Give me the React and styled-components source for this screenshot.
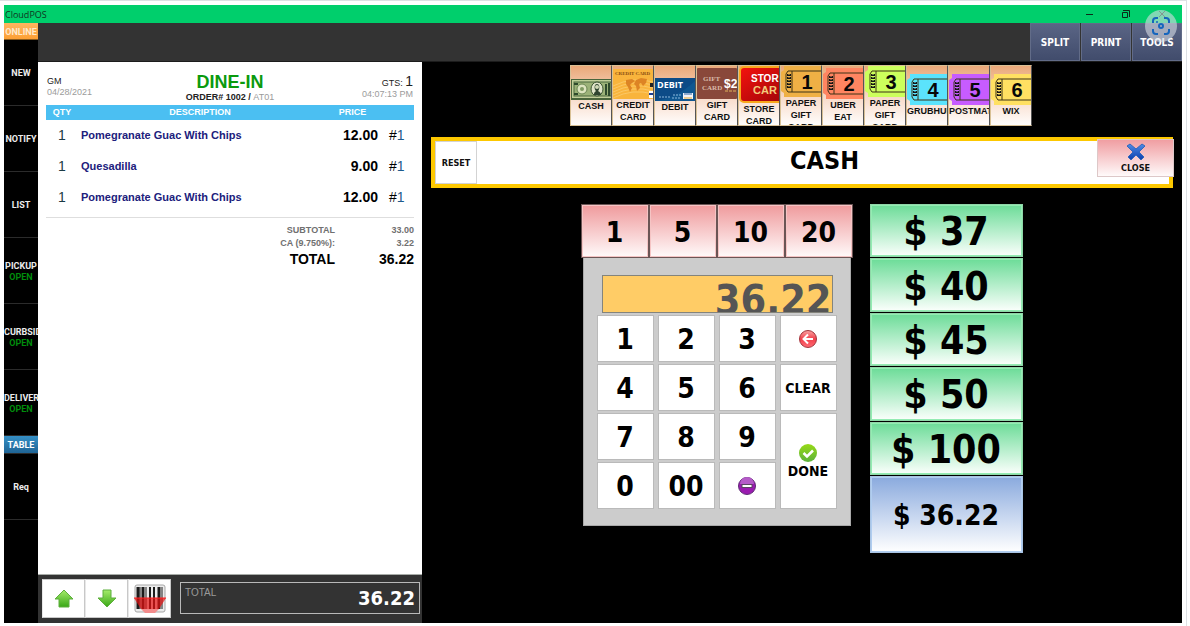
import styled, { createGlobalStyle, css } from "styled-components";

const tahoma = `"DejaVu Sans Condensed", "DejaVu Sans", sans-serif`;
const arial = `"Liberation Sans", Arial, sans-serif`;

const GlobalStyle = createGlobalStyle`
  * {
    box-sizing: border-box;
  }
  body {
    margin: 0;
    background: #ffffff;
    font-family: ${arial};
  }
  button {
    margin: 0;
    padding: 0;
    border: 0;
    cursor: pointer;
    color: inherit;
    font: inherit;
  }
`;

const Page = styled.div`
  display: flex;
  min-height: 100vh;
  margin-right: 3px;
  padding: 4px 4px 3px;
  border-top: 1px solid #dde0e4;
  border-right: 1px solid #dde0e4;
`;

const Window = styled.div`
  position: relative;
  flex: 1;
  display: flex;
  flex-direction: column;
  background: #000000;
`;

const TitleBar = styled.header`
  display: flex;
  justify-content: space-between;
  align-items: center;
  height: 18px;
  padding: 0 15px 0 1px;
  background: #00cf6c;
  color: #10351f;
  font: 9px "Open Sans", "Noto Sans", sans-serif;
`;

const WindowButtons = styled.div`
  display: flex;
  gap: 26px;
`;

const WindowButton = styled.button`
  display: flex;
  background: none;
`;

const LensButton = styled.button`
  position: absolute;
  top: 5px;
  right: 5px;
  display: flex;
  justify-content: center;
  align-items: center;
  width: 32px;
  height: 32px;
  border-radius: 50%;
  background: rgba(215, 220, 228, 0.6);
`;

const Body = styled.div`
  flex: 1;
  display: flex;
`;

const SideNav = styled.nav`
  display: flex;
  flex-direction: column;
  width: 34px;
  background: #000000;
`;

const NavButton = styled.button`
  width: 100%;
  height: 66px;
  padding-top: 2px;
  overflow: hidden;
  border-bottom: 1px solid #2b2b2b;
  background: #000000;
  color: #ececec;
  font: bold 9px/11px Roboto, sans-serif;
  text-align: center;
  white-space: nowrap;

  ${({ $tone }) =>
    $tone === "orange" &&
    css`
      height: 17px;
      border-bottom: 1px solid #8a5a1c;
      background: linear-gradient(#ffb560, #fda035);
      color: #ffe9cc;
    `}

  ${({ $tone }) =>
    $tone === "blue" &&
    css`
      height: 18px;
      background: linear-gradient(#3590c6, #1f6495);
      color: #ffffff;
    `}
`;

const OpenState = styled.span`
  display: block;
  color: #008c0c;
`;

const Main = styled.div`
  flex: 1;
  display: flex;
  flex-direction: column;
`;

const TopBar = styled.div`
  display: flex;
  justify-content: flex-end;
  gap: 1px;
  height: 39px;
  border-bottom: 1px solid #1c1c1c;
  background: #333333;
`;

const TopButton = styled.button`
  width: 50px;
  border: 1px solid #626c88;
  background: linear-gradient(#5a6585, #414c6c);
  color: #ffffff;
  font: bold 10px ${tahoma};
`;

const Content = styled.div`
  flex: 1;
  display: flex;
`;

const TicketColumn = styled.section`
  display: flex;
  flex-direction: column;
  width: 384px;
  background: #ffffff;
`;

const Ticket = styled.div`
  flex: 1;
  padding: 12px 8px 0;
`;

const TicketHead = styled.div`
  display: grid;
  grid-template-columns: 1fr auto 1fr;
  height: 31px;
  color: #222222;
  font-size: 9px;
  line-height: 11px;
`;

const HeadSide = styled.div`
  padding: 2px 1px 0;
  text-align: ${({ $right }) => ($right ? "right" : "left")};
`;

const Muted = styled.div`
  color: #9b9b9b;
`;

const Guests = styled.span`
  font-size: 14px;
  line-height: 11px;
`;

const OrderTitle = styled.div`
  font-weight: bold;
  line-height: 13px;
  text-align: center;
`;

const OrderType = styled.h1`
  margin: 0;
  color: #0a9a0e;
  font-size: 18px;
  line-height: 17px;
`;

const TableName = styled.span`
  color: #9b9b9b;
  font-weight: normal;
`;

const ItemTable = styled.table`
  width: 100%;
  border-collapse: collapse;
  table-layout: fixed;

  th {
    height: 15px;
    padding: 0;
    background: #4bbff2;
    color: #ffffff;
    font-size: 9px;
    line-height: 13px;
  }

  td {
    height: 31px;
    padding: 0 0 2px;
    font-size: 14px;
  }
`;

const Qty = styled.td`
  color: #1b3b44;
  text-align: center;
`;

const ItemName = styled.td`
  && {
    padding-left: 3px;
    color: #20207c;
    font-size: 11px;
    font-weight: bold;
  }
`;

const Price = styled.td`
  && {
    padding-right: 5px;
    font-weight: bold;
    text-align: right;
  }
`;

const Seat = styled.td`
  && {
    padding-left: 6px;
  }
`;

const SeatNumber = styled.span`
  color: #1d5a8c;
`;

const Totals = styled.dl`
  display: grid;
  grid-template-columns: 1fr 79px;
  margin: 4px 0 0;
  padding-top: 6px;
  border-top: 1px solid #dedede;
  color: #707070;
  font-size: 9px;
  font-weight: bold;
  line-height: 13px;
  text-align: right;

  dd {
    margin: 0;
  }

  dt:last-of-type,
  dd:last-of-type {
    color: #000000;
    font-size: 14px;
    line-height: 18px;
  }
`;

const TicketFooter = styled.div`
  display: flex;
  height: 49px;
  padding: 4px 2px 5px 4px;
  border-top: 1px solid #a8aca8;
  background: #333333;
`;

const ToolButton = styled.button`
  display: flex;
  justify-content: center;
  align-items: center;
  width: 43px;
  border: 1px solid #c8c8c8;
  border-left-color: #e8e8e8;
  background: #ffffff;
`;

const FooterTotal = styled.div`
  flex: 1;
  display: flex;
  justify-content: space-between;
  margin: 3px 0 4px 9px;
  padding: 4px 4px 0;
  border: 1px solid #b9b9b9;
  color: #9a9a9a;
  font-size: 10px;
`;

const FooterAmount = styled.strong`
  color: #ffffff;
  font: bold 20px/22px ${tahoma};
`;

const PayArea = styled.main`
  flex: 1;
  display: flex;
  flex-direction: column;
  align-items: center;
  padding: 3px 9px 0;
`;

const TenderRow = styled.div`
  display: flex;
  height: 61px;
  padding-right: 2px;
`;

const TenderButton = styled.button`
  display: flex;
  flex-direction: column;
  align-items: center;
  justify-content: safe center;
  width: 42px;
  height: 61px;
  overflow: hidden;
  border: 1px solid #d8c095;
  border-right-color: #555555;
  background: linear-gradient(#eaa878, #f8dccb 55%, #fffdfc);
  color: #111111;
  font: bold 9px/12px ${arial};

  svg {
    flex: none;
  }
`;

const TenderLabel = styled.span`
  flex: none;
  max-width: 100%;
  text-align: center;
`;

const TenderBar = styled.div`
  position: relative;
  display: flex;
  align-self: stretch;
  height: 51px;
  margin-top: 11px;
  border: 4px solid #fdc800;
  background: #ffffff;
`;

const ResetButton = styled.button`
  width: 42px;
  border: 1px solid #d3d3d3;
  background: #ffffff;
  color: #111111;
  font: bold 9px ${tahoma};
`;

const TenderTitle = styled.h2`
  flex: 1;
  margin: 0;
  padding-left: 3px;
  font: bold 25px/40px ${tahoma};
  text-align: center;
`;

const CloseButton = styled.button`
  position: absolute;
  top: -2px;
  right: -5px;
  display: flex;
  flex-direction: column;
  align-items: center;
  justify-content: center;
  gap: 2px;
  width: 77px;
  height: 38px;
  border: 1px solid #ddc8c8;
  background: linear-gradient(#f09ea2, #fffafa);
  color: #111111;
  font: bold 9px/10px ${tahoma};
`;

const PayPanels = styled.div`
  display: flex;
  gap: 17px;
  margin-top: 16px;
  padding-right: 1px;
`;

const PadColumn = styled.div`
  width: 272px;
`;

const BillRow = styled.div`
  display: grid;
  grid-template-columns: repeat(4, 1fr);
`;

const BillButton = styled.button`
  height: 54px;
  padding-top: 2px;
  border: 1px solid #6b5555;
  box-shadow: inset 0 0 0 1px #f5c4c4;
  background: linear-gradient(#ef9a9c, #fffafa);
  color: #000000;
  font: bold 28px ${tahoma};
`;

const Pad = styled.div`
  margin: 0 2px;
  padding: 17px 13px 16px;
  border: 1px solid #a9a9a9;
  border-top: 0;
  background: #cccccc;
`;

const AmountDisplay = styled.output`
  display: block;
  height: 38px;
  margin: 0 4px 2px 5px;
  overflow: hidden;
  border: 1px solid #84847c;
  background: #ffcc66;
  color: #555555;
  font: bold 41px/48px ${tahoma};
  text-align: right;
`;

const Keys = styled.div`
  display: grid;
  grid-template-columns: repeat(4, 1fr);
  grid-template-rows: repeat(4, 47px);
  gap: 2px 4px;
`;

const Key = styled.button`
  display: flex;
  flex-direction: column;
  align-items: center;
  justify-content: center;
  grid-row: span ${({ $tall }) => ($tall ? 2 : 1)};
  padding-top: ${({ $digit }) => ($digit ? "3px" : "0")};
  border: 1px solid #bababa;
  background: #ffffff;
  color: #000000;
  font: bold ${({ $word }) => ($word ? "14px/16px" : "28px/32px")} ${tahoma};
`;

const QuickColumn = styled.div`
  display: grid;
  grid-template-rows: repeat(5, 1fr) 77px;
  gap: 1px;
  width: 153px;
  height: 349px;
`;

const QuickButton = styled.button`
  padding-top: 3px;
  border: 1px solid #8fd6a8;
  box-shadow: inset 0 0 0 1px #93ecb2;
  background: linear-gradient(#6cdc98, #fbfffc);
  color: #000000;
  font: bold 39px/44px ${tahoma};
  white-space: nowrap;

  ${({ $exact }) =>
    $exact &&
    css`
      border-color: #a9c4e4;
      box-shadow: inset 0 0 0 1px #b0cdf0;
      background: linear-gradient(#8aaade, #ffffff);
      font-size: 28px;
    `}
`;

const CashArt = () => (
  <svg width="40" height="21" viewBox="0 0 40 21">
    <rect width="40" height="21" fill="#49653b" />
    <rect x="1" y="1" width="39" height="18" fill="#c2cf9a" />
    <rect x="3" y="3" width="37" height="14" fill="#9bb278" stroke="#4a683c" />
    <circle cx="11" cy="10" r="5" fill="#dce4bf" stroke="#6a8552" />
    <circle cx="11" cy="10" r="2" fill="#7f9a63" />
    <ellipse cx="26" cy="10" rx="6" ry="7" fill="#dfe4c8" stroke="#3c5532" />
    <path d="M23 16c0-3 1-3 2-4-2-2-2-7 1-7s3 5 1 7c2 1 3 2 3 4z" fill="#2f4530" />
    <circle cx="26" cy="8" r="2" fill="#cfd8b5" />
    <path d="M35 5v11M38 4v13M3 5h4M3 15h4" stroke="#2f4a2c" strokeWidth="2" />
  </svg>
);

const CreditArt = () => (
  <svg width="40" height="30" viewBox="0 0 40 30">
    <rect width="40" height="30" rx="1" fill="#f9b43c" />
    <path d="M0 17Q20 7 40 13M0 20Q20 10 40 16M0 23Q20 13 40 19M0 26Q20 16 40 22M0 29Q20 19 40 25" fill="none" stroke="#fbc765" />
    <text x="2" y="6" fontFamily="Liberation Serif, serif" fontSize="5" fill="#8a4d10">CREDIT CARD</text>
    <path d="M13 11l6-1 3 2-3 2-2 2 2 3-2 4-2-5-2-3zM23 11l5-2 6 1-1 4-3 3-2-3-2 1 1 4-3 3-1-5-2-2z" fill="#dd8424" />
    <rect x="37" y="14" width="3" height="4" fill="#222222" />
    <rect x="36" y="22" width="4" height="7" fill="#ffffff" />
    <path d="M36 25h4" stroke="#1d3f92" strokeWidth="2" />
  </svg>
);

const DebitArt = () => (
  <svg width="40" height="23" viewBox="0 0 40 23">
    <rect width="40" height="23" fill="#0c4b87" />
    <path d="M0 23Q22 20 40 3v20z" fill="#0f5791" />
    <text x="2" y="10" fontFamily="Open Sans, sans-serif" fontSize="9" fontWeight="bold" fill="#ffffff">DEBIT</text>
    <path d="M4 19h12M18 17h8M17 20h9" stroke="#8bb8dc" strokeDasharray="2 1" />
    <rect x="28" y="15" width="10" height="6" fill="#f2f4f8" />
    <path d="M29 16h8" stroke="#2962a5" />
    <path d="M29 20h8" stroke="#e7a92d" />
  </svg>
);

const GiftArt = () => (
  <svg width="40" height="31" viewBox="0 0 40 31">
    <rect width="40" height="31" rx="1" fill="#89483a" />
    <g fontFamily="Liberation Serif, serif" fontSize="7" fontWeight="bold" fill="#d9b9a8">
      <text x="6" y="13">GIFT</text>
      <text x="5" y="22">CARD</text>
    </g>
    <text x="27" y="20" fontFamily="Liberation Sans, sans-serif" fontSize="12" fontWeight="bold" fill="#ffffff">$2</text>
    <path d="M28 23h12" stroke="#e0b35c" strokeDasharray="3 1" />
  </svg>
);

const StoreArt = () => (
  <svg width="40" height="37" viewBox="0 0 40 37">
    <defs>
      <linearGradient id="store" x2="1" y2="1">
        <stop offset="0" stopColor="#f5120e" />
        <stop offset="1" stopColor="#9c0508" />
      </linearGradient>
    </defs>
    <rect x="1" y="1" width="48" height="35" rx="4" fill="url(#store)" stroke="#f8a81c" strokeWidth="2" />
    <g fontFamily="Liberation Sans, sans-serif" fontSize="10" fontWeight="bold">
      <text x="12" y="16" fill="#ffffff">STOR</text>
      <text x="14" y="28" fontSize="11" fill="#f2ca7c">CAR</text>
    </g>
  </svg>
);

const TicketArt = ({ number, color }) => (
  <svg width="40" height="31" viewBox="0 0 40 31">
    <path d="M3 0h37v31H3v-4L0 25V6l3-2z" fill={color} />
    <path d="M40 5H7L5 8v15l2 3h33M11 5v21" fill="none" stroke="#3d3216" />
    <path d="M8 8v15" stroke="#151515" strokeWidth="4" strokeDasharray="2 1" />
    <path d="M8 8v15" stroke={color} strokeDasharray="1 2" />
    <text x="26" y="23" textAnchor="middle" fontFamily="Liberation Sans, sans-serif" fontSize="20" fontWeight="bold" fill="#080808">
      {number}
    </text>
  </svg>
);

const ArrowArt = ({ down }) => (
  <svg width="20" height="20" viewBox="0 0 20 20">
    <defs>
      <linearGradient id="arrow" x2="0" y2="1">
        <stop offset="0" stopColor="#a5ec6b" />
        <stop offset="1" stopColor="#39a716" />
      </linearGradient>
    </defs>
    <path
      d={down ? "M6 1h8v8h5l-9 9-9-9h5z" : "M10 1l9 9h-4v8H5v-8H1z"}
      fill="url(#arrow)"
      stroke="#5dae3c"
      strokeLinejoin="round"
    />
  </svg>
);

const BarcodeArt = () => (
  <svg width="34" height="30" viewBox="0 0 34 30">
    <rect x="2" y="1" width="30" height="27" rx="2" fill="#ececec" stroke="#a7a7a7" />
    <path d="M5 3v22M10 3v22M26 3v22" stroke="#1c1c1c" strokeWidth="3" />
    <path d="M7 3v22M13 3v22M29 3v22" stroke="#1c1c1c" />
    <path d="M17 3v22M21 3v22" stroke="#1c1c1c" strokeWidth="2" />
    <path d="M1 14h32l-7 11H8z" fill="#e80f0f" fillOpacity="0.7" />
    <path d="M8 25h18l-4 4H12z" fill="#f38b8b" />
    <path d="M1 14h32" stroke="#ff2222" />
  </svg>
);

const CrossArt = () => (
  <svg width="20" height="18" viewBox="0 0 20 18">
    <defs>
      <linearGradient id="cross" x2="0" y2="1">
        <stop offset="0" stopColor="#4f8be6" />
        <stop offset="1" stopColor="#0c3fae" />
      </linearGradient>
    </defs>
    <path
      d="M1 3l3-2 6 5 6-5 3 2-6 6 5 5-3 3-5-5-5 5-3-3 5-5z"
      fill="url(#cross)"
      stroke="#3468bb"
      strokeLinejoin="round"
    />
  </svg>
);

const BackArt = () => (
  <svg width="20" height="20" viewBox="0 0 20 20">
    <defs>
      <linearGradient id="back" x2="0" y2="1">
        <stop offset="0" stopColor="#f9a3a3" />
        <stop offset="0.5" stopColor="#f2404c" />
        <stop offset="1" stopColor="#ff6b74" />
      </linearGradient>
    </defs>
    <circle cx="10" cy="10" r="8.5" fill="url(#back)" stroke="#a3353c" />
    <path d="M15 10H6M10 5.500l-4.500 4.500 4.500 4.500" fill="none" stroke="#ffffff" strokeWidth="2" />
  </svg>
);

const DoneArt = () => (
  <svg width="20" height="20" viewBox="0 0 20 20">
    <defs>
      <linearGradient id="done" x2="0" y2="1">
        <stop offset="0" stopColor="#97da16" />
        <stop offset="1" stopColor="#5cb13c" />
      </linearGradient>
    </defs>
    <circle cx="10" cy="10" r="9" fill="url(#done)" />
    <path d="M5.500 10l3.500 3.500 6-6" fill="none" stroke="#ffffff" strokeWidth="2.500" />
  </svg>
);

const MinusArt = () => (
  <svg width="20" height="20" viewBox="0 0 20 20">
    <circle cx="10" cy="10" r="8.500" fill="#9a1bb0" stroke="#5f2d75" />
    <path d="M3 8a7 7 0 0 1 14 0" fill="#b55bc8" />
    <rect x="5" y="8.500" width="10" height="3" fill="#ffffff" stroke="#5b4663" />
  </svg>
);

const LensArt = () => (
  <svg width="18" height="18" viewBox="0 0 18 18" fill="none" stroke="#1565bd" strokeWidth="2">
    <path d="M1 6V4a3 3 0 0 1 3-3h2M12 1h2a3 3 0 0 1 3 3v2M17 12v2a3 3 0 0 1-3 3h-2M6 17H4a3 3 0 0 1-3-3v-2" />
    <circle cx="9" cy="9" r="2" />
    <circle cx="5" cy="5" r="1" fill="#1565bd" stroke="none" />
  </svg>
);

const navItems = [
  { label: "ONLINE", tone: "orange" },
  { label: "NEW" },
  { label: "NOTIFY" },
  { label: "LIST" },
  { label: "PICKUP", open: true },
  { label: "CURBSIDE", open: true },
  { label: "DELIVERY", open: true },
  { label: "TABLE", tone: "blue" },
  { label: "Req" },
];

const items = [
  { qty: 1, name: "Pomegranate Guac With Chips", price: "12.00", seat: 1 },
  { qty: 1, name: "Quesadilla", price: "9.00", seat: 1 },
  { qty: 1, name: "Pomegranate Guac With Chips", price: "12.00", seat: 1 },
];

const tenders = [
  { label: "CASH", art: <CashArt /> },
  { label: "CREDIT CARD", art: <CreditArt /> },
  { label: "DEBIT", art: <DebitArt /> },
  { label: "GIFT CARD", art: <GiftArt /> },
  { label: "STORE CARD", art: <StoreArt /> },
  { label: "PAPER GIFT CARD", art: <TicketArt number={1} color="#efb045" /> },
  { label: "UBER EAT", art: <TicketArt number={2} color="#ff8561" /> },
  { label: "PAPER GIFT CARD", art: <TicketArt number={3} color="#ccff5c" /> },
  { label: "GRUBHUB", art: <TicketArt number={4} color="#5be3fc" /> },
  { label: "POSTMATES", art: <TicketArt number={5} color="#c75cff" /> },
  { label: "WIX", art: <TicketArt number={6} color="#ffe062" /> },
];

const App = () => {
  return (
    <Page>
      <GlobalStyle />
      <Window>
        <TitleBar>
          <span>CloudPOS</span>
          <WindowButtons>
            <WindowButton aria-label="Minimize">
              <svg width="10" height="10" viewBox="0 0 10 10">
                <path d="M1 5.500h7" stroke="#0b2b18" />
              </svg>
            </WindowButton>
            <WindowButton aria-label="Restore">
              <svg width="10" height="10" viewBox="0 0 10 10">
                <path d="M1.500 3.500h5v5h-5zM2 1.500h6.500V8" fill="none" stroke="#0b2b18" />
              </svg>
            </WindowButton>
            <WindowButton aria-label="Close window">
              <svg width="10" height="10" viewBox="0 0 10 10">
                <path d="M2 2l6 6M8 2L2 8" stroke="#0b2b18" />
              </svg>
            </WindowButton>
          </WindowButtons>
        </TitleBar>

        <Body>
          <SideNav>
            {navItems.map((item) => (
              <NavButton key={item.label} $tone={item.tone}>
                {item.label}
                {item.open && <OpenState>OPEN</OpenState>}
              </NavButton>
            ))}
          </SideNav>

          <Main>
            <TopBar>
              <TopButton>SPLIT</TopButton>
              <TopButton>PRINT</TopButton>
              <TopButton>TOOLS</TopButton>
            </TopBar>

            <Content>
              <TicketColumn>
                <Ticket>
                  <TicketHead>
                    <HeadSide>
                      GM
                      <Muted>04/28/2021</Muted>
                    </HeadSide>
                    <OrderTitle>
                      <OrderType>DINE-IN</OrderType>
                      ORDER# 1002 / <TableName>AT01</TableName>
                    </OrderTitle>
                    <HeadSide $right>
                      GTS: <Guests>1</Guests>
                      <Muted>04:07:13 PM</Muted>
                    </HeadSide>
                  </TicketHead>

                  <ItemTable>
                    <colgroup>
                      <col width="32" />
                      <col />
                      <col width="61" />
                      <col width="31" />
                    </colgroup>
                    <thead>
                      <tr>
                        <th>QTY</th>
                        <th>DESCRIPTION</th>
                        <th>PRICE</th>
                        <th aria-label="Seat" />
                      </tr>
                    </thead>
                    <tbody>
                      {items.map((item, index) => (
                        <tr key={index}>
                          <Qty>{item.qty}</Qty>
                          <ItemName>{item.name}</ItemName>
                          <Price>{item.price}</Price>
                          <Seat>
                            #<SeatNumber>{item.seat}</SeatNumber>
                          </Seat>
                        </tr>
                      ))}
                    </tbody>
                  </ItemTable>

                  <Totals>
                    <dt>SUBTOTAL</dt>
                    <dd>33.00</dd>
                    <dt>CA (9.750%):</dt>
                    <dd>3.22</dd>
                    <dt>TOTAL</dt>
                    <dd>36.22</dd>
                  </Totals>
                </Ticket>

                <TicketFooter>
                  <ToolButton aria-label="Scroll up">
                    <ArrowArt />
                  </ToolButton>
                  <ToolButton aria-label="Scroll down">
                    <ArrowArt down />
                  </ToolButton>
                  <ToolButton aria-label="Scan barcode">
                    <BarcodeArt />
                  </ToolButton>
                  <FooterTotal>
                    TOTAL
                    <FooterAmount>36.22</FooterAmount>
                  </FooterTotal>
                </TicketFooter>
              </TicketColumn>

              <PayArea>
                <TenderRow>
                  {tenders.map((tender, index) => (
                    <TenderButton key={index}>
                      {tender.art}
                      <TenderLabel>{tender.label}</TenderLabel>
                    </TenderButton>
                  ))}
                </TenderRow>

                <TenderBar>
                  <ResetButton>RESET</ResetButton>
                  <TenderTitle>CASH</TenderTitle>
                  <CloseButton>
                    <CrossArt />
                    CLOSE
                  </CloseButton>
                </TenderBar>

                <PayPanels>
                  <PadColumn>
                    <BillRow>
                      {[1, 5, 10, 20].map((bill) => (
                        <BillButton key={bill}>{bill}</BillButton>
                      ))}
                    </BillRow>
                    <Pad>
                      <AmountDisplay>36.22</AmountDisplay>
                      <Keys>
                        <Key $digit>1</Key>
                        <Key $digit>2</Key>
                        <Key $digit>3</Key>
                        <Key aria-label="Backspace">
                          <BackArt />
                        </Key>
                        <Key $digit>4</Key>
                        <Key $digit>5</Key>
                        <Key $digit>6</Key>
                        <Key $word>CLEAR</Key>
                        <Key $digit>7</Key>
                        <Key $digit>8</Key>
                        <Key $digit>9</Key>
                        <Key $word $tall>
                          <DoneArt />
                          DONE
                        </Key>
                        <Key $digit>0</Key>
                        <Key $digit>00</Key>
                        <Key aria-label="Minus">
                          <MinusArt />
                        </Key>
                      </Keys>
                    </Pad>
                  </PadColumn>

                  <QuickColumn>
                    {[37, 40, 45, 50, 100].map((amount) => (
                      <QuickButton key={amount}>$ {amount}</QuickButton>
                    ))}
                    <QuickButton $exact>$ 36.22</QuickButton>
                  </QuickColumn>
                </PayPanels>
              </PayArea>
            </Content>
          </Main>
        </Body>

        <LensButton aria-label="Visual search">
          <LensArt />
        </LensButton>
      </Window>
    </Page>
  );
};

export default App;
